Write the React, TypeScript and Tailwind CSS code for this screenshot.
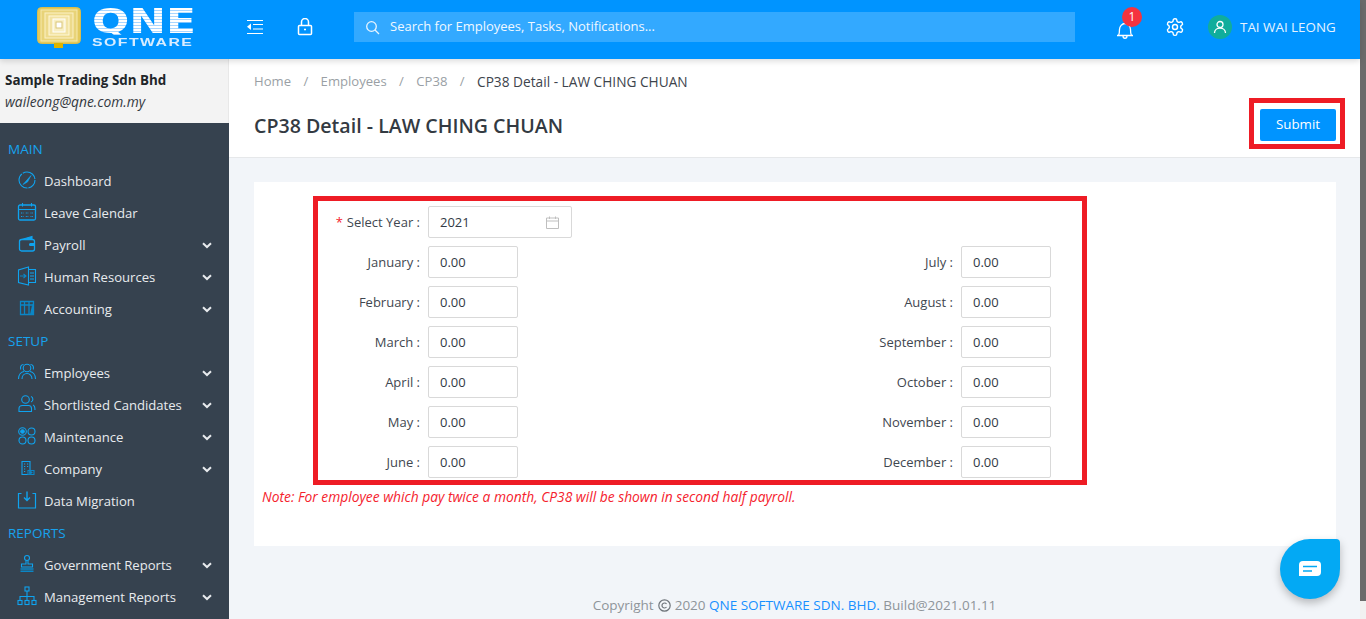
import type { ReactNode } from "react";

function Ico({ children, w = 20 }: { children: ReactNode; w?: number }) {
  return (
    <svg width={w} height={w} viewBox="0 0 20 20" fill="none" stroke="#0fa3ef" strokeWidth="1.1">
      {children}
    </svg>
  );
}

const icons: Record<string, ReactNode> = {
  gauge: (
    <Ico>
      <circle cx="10" cy="10" r="8" strokeDasharray="11 1 20 1 16 1" />
      <path d="M6 14.500 L14 5.500 L10.500 12 Z" fill="#0fa3ef" strokeWidth="0.6" />
    </Ico>
  ),
  calendar: (
    <Ico>
      <rect x="1.5" y="3" width="17" height="15" rx="1.500" strokeWidth="1.300" />
      <path d="M1.500 7.500h17M5.500 1v3.500M14.500 1v3.500" />
      <path d="M4 11h2.500M8.800 11h2.500M13.500 11h2.500M4 14.500h2.500M8.800 14.500h2.500M13.500 14.500h2.500" strokeDasharray="1 .7" />
    </Ico>
  ),
  wallet: (
    <Ico>
      <path d="M3 6 L15 2.500 V6" fill="#0fa3ef" />
      <rect x="2.500" y="5.500" width="15" height="11.500" rx="2" strokeWidth="1.300" />
      <path d="M17 9.500h-3.500a1 1 0 0 0 0 2H17" fill="#0fa3ef" />
    </Ico>
  ),
  book: (
    <Ico>
      <path d="M11.500 1 L1.500 4 V16.500 L11.500 19 Z" strokeWidth="1.100" />
      <path d="M11.500 3.500h7v13h-7M13 7h4M13 10h4M13 13h4" />
      <path d="M3 10h6M6.500 8 9 10l-2.500 2" stroke="#0b86c6" />
    </Ico>
  ),
  columns: (
    <Ico>
      <path d="M3.500 3.500h13v13h-13zM3.500 7h13M7.500 3.500v13M12 3.500v13" stroke="#0b86c6" strokeWidth="1.300" />
      <path d="M13 16.500 L15.500 5 L17 16.500Z" fill="#0b86c6" stroke="none" />
    </Ico>
  ),
  users: (
    <Ico>
      <circle cx="10" cy="6" r="3.800" />
      <path d="M1.500 17c0-4 2.500-7 5.500-7.500M18.500 17c0-4-2.500-7-5.500-7.500M5 17c0-3 2-5.500 5-5.500s5 2.500 5 5.500" />
      <path d="M6.500 2.500C4 2.500 3 5 3.800 7.500M13.500 2.500C16 2.500 17 5 16.200 7.500" />
    </Ico>
  ),
  candidates: (
    <Ico>
      <circle cx="8.500" cy="5.500" r="3.800" />
      <path d="M2 17.500v-3C2 12.500 3.500 11.500 5.500 11.500h6c2 0 3 1 3 3v3H2z" />
      <path d="M14 2.500c2.500.8 2.500 4.500 0 5.500M16 11c1.500.5 2 2 2 5" />
    </Ico>
  ),
  gears: (
    <Ico>
      <circle cx="5.500" cy="5.500" r="3.800" />
      <circle cx="5.500" cy="5.500" r="1.800" fill="#0fa3ef" />
      <circle cx="14.500" cy="5.500" r="3.500" />
      <circle cx="5.500" cy="14.500" r="3.500" />
      <circle cx="14.500" cy="14.500" r="3.500" />
    </Ico>
  ),
  building: (
    <Ico>
      <path d="M5 16.500V3.500h8V16.500H5zM7 6h1.200M10 6h1.200M7 8.500h1.200M10 8.500h1.200M7 11h1.200M7 13.500h1.200" strokeWidth="1.100" />
      <path d="M11 16.500v-4h6v4h-6zM12.500 14.500h3M14 12.500v4" stroke="#0b86c6" />
    </Ico>
  ),
  tray: (
    <Ico>
      <path d="M4.500 3.500 H1.500 V18 H18.500 V3.500 H15.500" strokeWidth="1.200" />
      <path d="M10 1.500v8.500M7 7.500l3 3 3-3" strokeWidth="1.400" />
    </Ico>
  ),
  stamp: (
    <Ico>
      <circle cx="10" cy="4" r="2.500" />
      <path d="M9 6.500V10H4.500v3h11v-3H11V6.500" />
      <path d="M3.500 15h13M3.500 17.200h13" strokeWidth="1.600" stroke="#0b86c6" />
    </Ico>
  ),
  org: (
    <Ico>
      <rect x="8" y="1" width="4" height="4" />
      <rect x="1" y="14.500" width="4" height="4" />
      <rect x="8" y="14.500" width="4" height="4" />
      <rect x="15" y="14.500" width="4" height="4" />
      <path d="M10 5v9.500M3 14.500V10.500h14v4" />
    </Ico>
  ),
};

function Chevron() {
  return (
    <svg width="10" height="7" viewBox="0 0 10 7" fill="none" stroke="#e8ebee" strokeWidth="2">
      <path d="M1 1.200 5 5l4-3.800" />
    </svg>
  );
}

function NavItem({ icon, label, more }: { icon: string; label: string; more?: boolean }) {
  return (
    <div className="flex h-8 items-center pl-[17px] pr-[17px] text-[13.1px] text-[#e8ebee]">
      <span className="mb-[3px] flex w-[27px] shrink-0">{icons[icon]}</span>
      <span className="flex-1 whitespace-nowrap pt-[1px]">{label}</span>
      {more && <Chevron />}
    </div>
  );
}

function Section({ title }: { title: string }) {
  return <div className="flex h-8 items-center pl-2 text-[13.5px] text-[#17a2ee]">{title}</div>;
}

function Field({ label, value }: { label: string; value: string }) {
  return (
    <div className="flex h-8 items-center">
      <span className="w-[102px] whitespace-nowrap pt-[1px] text-right text-[13px] text-[#3f4750]">{label} :</span>
      <div className="ml-2 flex h-8 w-[90px] items-center rounded-[2px] border border-[#d9d9d9] pl-[11px] pt-[2px] text-[13px] text-[#323a45]">
        {value}
      </div>
    </div>
  );
}

const left = [
  ["January", "July"],
  ["February", "August"],
  ["March", "September"],
  ["April", "October"],
  ["May", "November"],
  ["June", "December"],
];

export default function App() {
  return (
    <div className="relative flex h-[619px] w-[1366px] overflow-hidden bg-[#f2f5f9] font-['Open_Sans','Noto_Sans',sans-serif]">
      <div className="flex w-[1360px] shrink-0 flex-col">
        <header className="z-10 flex h-[59px] shrink-0 items-center bg-[#0094ff] pb-[5px] shadow-[0_2px_6px_rgba(0,0,0,0.15)]">
          <div className="ml-[37px] flex w-[157px] shrink-0 items-center">
            <svg width="44" height="41" viewBox="0 0 44 41" className="shrink-0">
              <rect x="0.5" y="0.5" width="43" height="36" rx="4" fill="#e3c95c" stroke="#d9bd4d" />
              <rect x="4" y="3" width="36" height="31" fill="#e8d378" stroke="#f6e9ae" />
              <rect x="8" y="6" width="28" height="25" fill="#edda8b" stroke="#fbf1c6" />
              <rect x="12" y="9" width="20" height="19" fill="#f2e3a4" stroke="#fff8d8" />
              <rect x="16" y="12" width="12" height="13" fill="#f8efc4" stroke="#fff" />
              <rect x="19" y="15" width="6" height="6" fill="#fff" stroke="#d9c578" />
              <rect x="17" y="36" width="9" height="5" fill="#dcb400" />
            </svg>
            <div className="ml-[11px] flex flex-col items-start">
              <span className="origin-left scale-x-[1.33] bg-[repeating-linear-gradient(180deg,#ffffff_0px,#ffffff_2px,#a9d6ff_2px,#a9d6ff_3px)] bg-clip-text font-['DejaVu_Sans',sans-serif] text-[33px] font-bold leading-[27px] text-transparent">
                QNE
              </span>
              <span className="mt-[2px] origin-left scale-x-[1.44] font-['Liberation_Sans',sans-serif] text-[11px] font-bold leading-[10px] tracking-[1px] text-[#d8ecff]">
                SOFTWARE
              </span>
            </div>
          </div>
          <svg className="ml-[52px] shrink-0" width="18" height="16" viewBox="0 0 18 16" fill="none" stroke="#fff" strokeWidth="1.2">
            <path d="M1 1.500h16M7 5.500h10M7 10h10M1 14.500h16" />
            <path d="M5 4.500v6.500L1 7.700z" fill="#fff" stroke="none" />
          </svg>
          <svg className="ml-[33px] shrink-0" width="16" height="18" viewBox="0 0 16 18" fill="none" stroke="#fff" strokeWidth="1.5">
            <rect x="1.500" y="7.500" width="13" height="9" rx="1" />
            <path d="M4.500 7.500V4a3.500 3.500 0 0 1 7 0v3.500M7 11.500h2" />
          </svg>
          <div className="ml-[41px] flex h-[30px] w-[721px] shrink-0 items-center bg-[#33a9ff] pl-[11px] text-[13px] text-[#f0f8ff]">
            <svg width="15" height="15" viewBox="0 0 15 15" fill="none" stroke="#e8f4ff" strokeWidth="1.3">
              <circle cx="6.500" cy="6.500" r="4.800" />
              <path d="m10 10 4 4" />
            </svg>
            <span className="ml-[10px]">Search for Employees, Tasks, Notifications...</span>
          </div>
          <div className="relative ml-[41px] mt-[6px] h-[20px] w-[18px] shrink-0">
            <svg width="18" height="20" viewBox="0 0 18 20" fill="none" stroke="#fff" strokeWidth="1.3">
              <path d="M2.500 15.500c1-1.500 1-3 1-6s2.500-6 5.500-6 5.500 3 5.500 6 0 4.500 1 6zM1 15.500h16M7 16c0 3 4 3 4 0" />
            </svg>
            <span className="absolute -top-[13px] left-[6px] flex h-5 w-5 items-center justify-center rounded-full bg-[#f5333f] text-xs text-white">
              1
            </span>
          </div>
          <svg className="ml-[31px] shrink-0" width="20" height="20" viewBox="0 0 24 24" fill="none" stroke="#fff" strokeWidth="1.7" strokeLinecap="round" strokeLinejoin="round">
            <path d="M12.220 2h-.440a2 2 0 0 0-2 2v.180a2 2 0 0 1-1 1.730l-.430.250a2 2 0 0 1-2 0l-.150-.080a2 2 0 0 0-2.730.730l-.220.380a2 2 0 0 0 .730 2.730l.150.100a2 2 0 0 1 1 1.720v.510a2 2 0 0 1-1 1.740l-.150.090a2 2 0 0 0-.730 2.730l.220.380a2 2 0 0 0 2.730.730l.150-.080a2 2 0 0 1 2 0l.430.250a2 2 0 0 1 1 1.730V20a2 2 0 0 0 2 2h.440a2 2 0 0 0 2-2v-.180a2 2 0 0 1 1-1.730l.430-.250a2 2 0 0 1 2 0l.150.080a2 2 0 0 0 2.730-.730l.220-.390a2 2 0 0 0-.730-2.730l-.150-.080a2 2 0 0 1-1-1.740v-.500a2 2 0 0 1 1-1.740l.150-.090a2 2 0 0 0 .730-2.730l-.220-.380a2 2 0 0 0-2.730-.730l-.150.080a2 2 0 0 1-2 0l-.430-.250a2 2 0 0 1-1-1.730V4a2 2 0 0 0-2-2z" />
            <circle cx="12" cy="12" r="3" />
          </svg>
          <span className="ml-[23px] flex h-6 w-6 shrink-0 items-center justify-center rounded-full bg-[#10ad9c]">
            <svg width="14" height="14" viewBox="0 0 14 14" fill="none" stroke="#fff" strokeWidth="1.3">
              <circle cx="7" cy="4.500" r="3" />
              <path d="M1.500 13c0-3 2.500-5 5.500-5s5.500 2 5.500 5" />
            </svg>
          </span>
          <span className="ml-[8px] whitespace-nowrap text-[13.4px] text-[#e6f3ff]">TAI WAI LEONG</span>
        </header>

        <div className="flex min-h-0 flex-1">
          <aside className="flex w-[229px] shrink-0 flex-col">
            <div className="h-[64px] shrink-0 border-r border-[#e8e8e8] bg-[#f3f3f3] pl-[5px] pt-[13px]">
              <div className="whitespace-nowrap text-[13.4px] font-bold leading-[16px] text-[#212529]">Sample Trading Sdn Bhd</div>
              <div className="mt-[6px] text-[13.8px] italic leading-[16px] text-[#33393f]">waileong@qne.com.my</div>
            </div>
            <nav className="flex-1 bg-[#36424f] pt-[10px]">
              <Section title="MAIN" />
              <NavItem icon="gauge" label="Dashboard" />
              <NavItem icon="calendar" label="Leave Calendar" />
              <NavItem icon="wallet" label="Payroll" more />
              <NavItem icon="book" label="Human Resources" more />
              <NavItem icon="columns" label="Accounting" more />
              <Section title="SETUP" />
              <NavItem icon="users" label="Employees" more />
              <NavItem icon="candidates" label="Shortlisted Candidates" more />
              <NavItem icon="gears" label="Maintenance" more />
              <NavItem icon="building" label="Company" more />
              <NavItem icon="tray" label="Data Migration" />
              <Section title="REPORTS" />
              <NavItem icon="stamp" label="Government Reports" more />
              <NavItem icon="org" label="Management Reports" more />
            </nav>
          </aside>

          <main className="flex min-w-0 flex-1 flex-col">
            <div className="h-[99px] shrink-0 border-b border-[#e6e8ea] bg-white pl-[25px]">
              <div className="flex h-[46px] items-center gap-[12.4px] text-[13.1px] text-[#9a9fa5]">
                <span>Home</span>
                <span>/</span>
                <span>Employees</span>
                <span>/</span>
                <span>CP38</span>
                <span>/</span>
                <span className="text-[13.7px] text-[#3d444c]">CP38 Detail - LAW CHING CHUAN</span>
              </div>
              <div className="flex items-start justify-between pr-[15px]">
                <h1 className="mt-[6px] text-[19.6px] font-semibold leading-[30px] text-[#333a42]">CP38 Detail - LAW CHING CHUAN</h1>
                <div className="-mt-[7px] flex h-[51px] w-[96px] items-start justify-end border-[5px] border-[#ee1c25] pr-[4px] pt-[6px]">
                  <button className="h-8 w-[76px] rounded-[2px] bg-[#0094ff] text-[13.3px] text-white">Submit</button>
                </div>
              </div>
            </div>

            <div className="ml-[25px] mr-[24px] mt-[24px] h-[364px] shrink-0 bg-white pl-[59px] pt-[14px]">
              <div className="h-[289px] w-[774px] border-[5px] border-[#ee1c25] pt-[5px]">
                <div className="flex h-8 items-center">
                  <span className="w-[102px] whitespace-nowrap pt-[1px] text-right text-[13px] text-[#3f4750]">
                    <span className="mr-1 text-[#f5222d]">*</span>Select Year :
                  </span>
                  <div className="ml-2 flex h-8 w-[144px] items-center justify-between rounded-[2px] border border-[#d9d9d9] pl-[11px] pr-[12px] pt-[1px] text-[13px] text-[#323a45]">
                    2021
                    <svg width="13" height="13" viewBox="0 0 13 13" fill="none" stroke="#bfbfbf">
                      <path d="M.5 2h12v10.500H.5zM.5 5h12M3.500 .5v2.500M9.500 .5v2.500" />
                    </svg>
                  </div>
                </div>
                <div className="mt-2 grid grid-cols-[533px_1fr] gap-y-2">
                  {left.map(([a, b]) => (
                    <div key={a} className="contents">
                      <Field label={a} value="0.00" />
                      <Field label={b} value="0.00" />
                    </div>
                  ))}
                </div>
              </div>
              <p className="-ml-[51px] mt-[2px] whitespace-nowrap text-[13.8px] italic leading-[20px] text-[#f5222d]">
                Note: For employee which pay twice a month, CP38 will be shown in second half payroll.
              </p>
            </div>

            <footer className="mt-[49px] flex items-center justify-center whitespace-nowrap text-[13.5px] leading-[20px] text-[#8e949a]">
              Copyright
              <svg className="mx-[4px]" width="13" height="13" viewBox="0 0 13 13" fill="none" stroke="#6f757b" strokeWidth="1.2">
                <circle cx="6.5" cy="6.5" r="5.700" />
                <path d="M8.500 5a2.500 2.500 0 1 0 0 3" />
              </svg>
              2020&nbsp;<span className="text-[#1890ff]">QNE SOFTWARE SDN. BHD.</span>&nbsp;Build@2021.01.11
            </footer>
          </main>
        </div>
      </div>

      <div className="flex w-[6px] shrink-0 flex-col bg-[#f1f1f1]">
        <div className="h-[601px] bg-[#6b6b6b]" />
      </div>

      <div className="absolute left-[1280px] top-[539px] flex h-[60px] w-[60px] items-center justify-center rounded-[30px_4px_30px_30px] bg-[#03a9f4] shadow-[0_4px_8px_rgba(0,0,0,0.25)]">
        <svg width="24" height="18" viewBox="0 0 24 18">
          <path d="M5 1h14a4 4 0 0 1 4 4v7a4 4 0 0 1-4 4H1V5a4 4 0 0 1 4-4z" fill="#fff" />
          <path d="M5 6.500h14M5 11h9" stroke="#03a9f4" strokeWidth="1.500" />
        </svg>
      </div>
    </div>
  );
}
